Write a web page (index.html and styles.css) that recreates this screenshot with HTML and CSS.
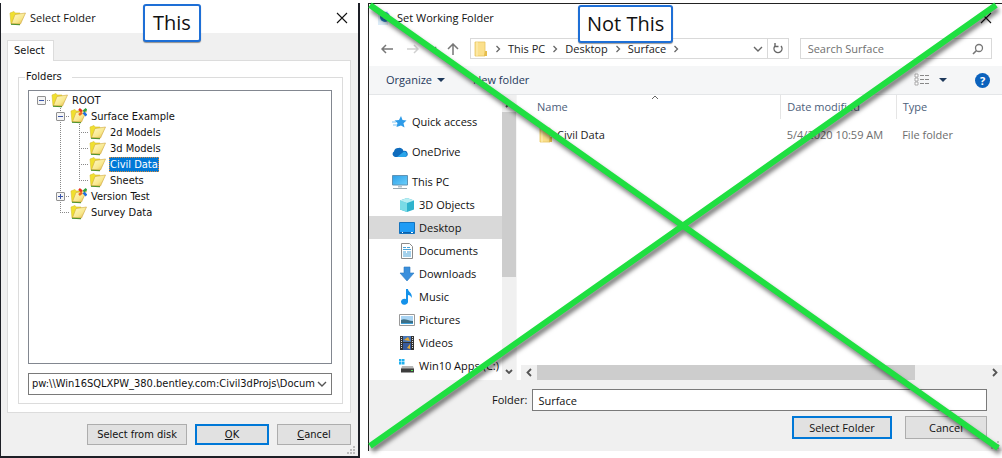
FILE: index.html
```html
<!DOCTYPE html>
<html lang="en">
<head>
    <meta charset="UTF-8">
    <meta name="viewport" content="width=device-width, initial-scale=1.0">
    <title>Select Folder</title>
    <link rel="stylesheet" href="styles.css">
</head>
<body>
    <!-- Shared icons -->
    <svg class="sprite" aria-hidden="true">
        <linearGradient id="gold" x1="0" y1="0" x2="1" y2="1">
            <stop offset="0" stop-color="#fffbd0"/>
            <stop offset=".6" stop-color="#f8e88c"/>
            <stop offset="1" stop-color="#dcb03a"/>
        </linearGradient>
        <linearGradient id="sky" x1="0" y1="0" x2="1" y2="1">
            <stop offset="0" stop-color="#2c9fe8"/>
            <stop offset="1" stop-color="#6cd0fb"/>
        </linearGradient>
        <symbol id="folder" viewBox="0 0 17 16">
            <path d="M1 3l4-1.500 1 1.500h5v10l-9 1z" fill="#f0e02e" stroke="#d8c030" stroke-width=".6"/>
            <path d="M2 14l9 .5" stroke="#3f8f2b" stroke-width="1.500"/>
            <path d="M6 4.500L16.500 3l-5 11L2.500 13.500z" fill="url(#gold)" stroke="#cfa63c" stroke-width=".6"/>
        </symbol>
        <symbol id="project" viewBox="0 0 17 16">
            <use href="#folder" width="17" height="16"/>
            <path d="M9 1l3 2.500" stroke="#e8321c" stroke-width="2.500"/>
            <path d="M16.500 1l-3 2.500" stroke="#2fa33a" stroke-width="2.500"/>
            <path d="M9 7l3-2.500" stroke="#f06a1c" stroke-width="2.500"/>
            <path d="M13.500 4.500l3 3" stroke="#1f6fe0" stroke-width="2.500"/>
        </symbol>
        <symbol id="plain-folder" viewBox="0 0 14 16">
            <path d="M1 1h10v14H1z" fill="#fbe08c" stroke="#e8c560" stroke-width=".8"/>
            <path d="M11 10h2v5h-3z" fill="#e6bd4c"/>
            <path d="M3 1v14" stroke="#fff0b8"/>
        </symbol>
        <symbol id="close" viewBox="0 0 12 12">
            <path d="M1 1l10 10M11 1L1 11" fill="none" stroke="#111" stroke-width="1.100"/>
        </symbol>
        <symbol id="chev-down" viewBox="0 0 10 6">
            <path d="M1 1l4 4 4-4" fill="none" stroke="currentColor" stroke-width="1.400"/>
        </symbol>
        <symbol id="chev-right" viewBox="0 0 6 8">
            <path d="M1.500 1l3 3-3 3" fill="none" stroke="currentColor" stroke-width="1.300"/>
        </symbol>
        <symbol id="grip" viewBox="0 0 9 9">
            <path d="M6 0h2v2h-2zM3 3h2v2H3zM6 3h2v2H6zM0 6h2v2H0zM3 6h2v2H3zM6 6h2v2H6z" fill="#bdbdbd"/>
        </symbol>
    </svg>

    <section class="dialog select-dialog">
        <header class="title-bar">
            <svg class="title-icon" width="17" height="16"><use href="#folder"/></svg>
            <h1>Select Folder</h1>
            <button class="close-btn" aria-label="Close"><svg width="12" height="12"><use href="#close"/></svg></button>
        </header>

        <div class="dialog-body">
            <button class="tab">Select</button>
            <div class="tab-panel">
                <fieldset class="folders">
                    <legend>Folders</legend>
                    <ul class="tree">
                        <li class="tree-row">
                            <span class="guide leaf"><button class="expander" aria-label="Collapse ROOT"></button></span>
                            <svg width="17" height="16"><use href="#folder"/></svg>
                            <span class="tree-label">ROOT</span>
                        </li>
                        <li class="tree-row">
                            <span class="guide empty"></span><span class="guide tee"><button class="expander" aria-label="Collapse Surface Example"></button></span>
                            <svg width="17" height="16"><use href="#project"/></svg>
                            <span class="tree-label">Surface Example</span>
                        </li>
                        <li class="tree-row">
                            <span class="guide empty"></span><span class="guide line"></span><span class="guide tee"></span>
                            <svg width="17" height="16"><use href="#folder"/></svg>
                            <span class="tree-label">2d Models</span>
                        </li>
                        <li class="tree-row">
                            <span class="guide empty"></span><span class="guide line"></span><span class="guide tee"></span>
                            <svg width="17" height="16"><use href="#folder"/></svg>
                            <span class="tree-label">3d Models</span>
                        </li>
                        <li class="tree-row">
                            <span class="guide empty"></span><span class="guide line"></span><span class="guide tee"></span>
                            <svg width="17" height="16"><use href="#folder"/></svg>
                            <span class="tree-label selected">Civil Data</span>
                        </li>
                        <li class="tree-row">
                            <span class="guide empty"></span><span class="guide line"></span><span class="guide elbow"></span>
                            <svg width="17" height="16"><use href="#folder"/></svg>
                            <span class="tree-label">Sheets</span>
                        </li>
                        <li class="tree-row">
                            <span class="guide empty"></span><span class="guide tee"><button class="expander plus" aria-label="Expand Version Test"></button></span>
                            <svg width="17" height="16"><use href="#project"/></svg>
                            <span class="tree-label">Version Test</span>
                        </li>
                        <li class="tree-row">
                            <span class="guide empty"></span><span class="guide elbow"></span>
                            <svg width="17" height="16"><use href="#folder"/></svg>
                            <span class="tree-label">Survey Data</span>
                        </li>
                    </ul>
                    <div class="path-box">
                        <select class="path-select" aria-label="Path">
                            <option>pw:\\Win16SQLXPW_380.bentley.com:Civil3dProjs\Docum</option>
                        </select>
                        <svg width="10" height="6"><use href="#chev-down"/></svg>
                    </div>
                </fieldset>
            </div>
            <div class="actions">
                <button class="btn wide">Select from disk</button>
                <button class="btn primary"><span><u>O</u>K</span></button>
                <button class="btn"><span><u>C</u>ancel</span></button>
            </div>
        </div>
        <svg class="grip" width="9" height="9"><use href="#grip"/></svg>
        <div class="callout callout-this">This</div>
    </section>

    <section class="dialog working-dialog">
        <header class="title-bar">
            <svg class="title-icon" width="16" height="16" viewBox="0 0 16 16">
                <path d="M1 1h10v14H1z" fill="#dcecf8"/>
                <circle cx="8" cy="7" r="5" fill="#2b7fc4"/>
                <circle cx="8" cy="7" r="2" fill="#9bd0f2"/>
            </svg>
            <h1>Set Working Folder</h1>
            <button class="close-btn" aria-label="Close"><svg width="12" height="12"><use href="#close"/></svg></button>
        </header>

        <div class="nav-row">
            <div class="nav-buttons">
                <button aria-label="Back"><svg width="12" height="10" viewBox="0 0 12 10"><path d="M12 5H1M5 1L1 5l4 4" fill="none" stroke="#777" stroke-width="1.500"/></svg></button>
                <button aria-label="Forward"><svg width="12" height="10" viewBox="0 0 12 10"><path d="M0 5h11M7 1l4 4-4 4" fill="none" stroke="#d0d0d0" stroke-width="1.500"/></svg></button>
                <button aria-label="Recent"><svg width="8" height="5"><use href="#chev-down"/></svg></button>
                <button aria-label="Up"><svg width="12" height="12" viewBox="0 0 12 12"><path d="M6 12V1M1 6l5-5 5 5" fill="none" stroke="#777" stroke-width="1.500"/></svg></button>
            </div>
            <nav class="address">
                <svg width="14" height="16"><use href="#plain-folder"/></svg>
                <svg class="sep" width="6" height="8"><use href="#chev-right"/></svg>
                <a href="#">This PC</a>
                <svg class="sep" width="6" height="8"><use href="#chev-right"/></svg>
                <a href="#">Desktop</a>
                <svg class="sep" width="6" height="8"><use href="#chev-right"/></svg>
                <a href="#">Surface</a>
                <svg class="sep" width="6" height="8"><use href="#chev-right"/></svg>
                <button class="history" aria-label="Previous locations"><svg width="10" height="6"><use href="#chev-down"/></svg></button>
                <button class="refresh" aria-label="Refresh">
                    <svg width="12" height="12" viewBox="0 0 12 12"><path d="M3 3a4 4 0 1 0 6 0M3 0v3.500h3.500" fill="none" stroke="#666" stroke-width="1.400"/></svg>
                </button>
            </nav>
            <div class="search">
                <input type="text" placeholder="Search Surface" aria-label="Search Surface">
                <svg width="12" height="12" viewBox="0 0 12 12"><circle cx="7" cy="5" r="3.500" fill="none" stroke="#777" stroke-width="1.300"/><path d="M4.500 7.500L1 11" stroke="#777" stroke-width="1.600"/></svg>
            </div>
        </div>

        <div class="toolbar">
            <button class="tool">Organize <span class="caret"></span></button>
            <button class="tool">New folder</button>
            <button class="tool view-btn" aria-label="Change your view">
                <svg width="16" height="14" viewBox="0 0 16 14">
                    <path d="M1 1h3v3H1zM1 5h3v3H1zM1 9h3v3H1z" fill="#fff" stroke="#999" stroke-width=".8"/>
                    <path d="M6 2.500h4M11 2.500h4M6 6.500h4M11 6.500h4M6 10.500h4M11 10.500h4" stroke="#888"/>
                </svg>
                <span class="caret"></span>
            </button>
            <button class="help" aria-label="Help">?</button>
        </div>

        <div class="browser">
            <nav class="places">
                <a class="place root" href="#">
                    <svg width="16" height="16" viewBox="0 0 16 16"><path d="M9 2l1.500 4 4 .5-3 2.700 1 4.300L9 11.500 4.500 13l1-4L2.500 6.500l4.500-.5z" fill="#2d9be8"/><path d="M0 8h4M1 11h4" stroke="#7cc3f2"/></svg>
                    Quick access
                </a>
                <a class="place root" href="#">
                    <svg width="16" height="16" viewBox="0 0 16 16"><path d="M3 13a3 3 0 0 1-1-5.500 4 4 0 0 1 4.500-3.500 4 4 0 0 1 5 3 3 3 0 0 1 2 6z" fill="#0f6cbd"/><path d="M5 13l7-5.500a3 3 0 0 1 1.500 5.500z" fill="#2aa5ea"/></svg>
                    OneDrive
                </a>
                <a class="place root" href="#">
                    <svg width="16" height="16" viewBox="0 0 16 16"><path d="M.5 1.500h15v9.500H.5z" fill="url(#sky)" stroke="#5f93b5"/><path d="M6 11.500h4v2H6z" fill="#b7c4cc"/><path d="M1 14.500h14" stroke="#9aa8b0"/></svg>
                    This PC
                </a>
                <a class="place" href="#">
                    <svg width="16" height="16" viewBox="0 0 16 16"><path d="M8 1l7 2.500v9L8 15l-7-2.500v-9z" fill="#2fb3cd"/><path d="M1 3.500L8 6v9l-7-2.500z" fill="#7adbe6"/><path d="M8 1l7 2.500L8 6 1 3.500z" fill="#b9eef2"/></svg>
                    3D Objects
                </a>
                <a class="place current" href="#">
                    <svg width="16" height="16" viewBox="0 0 16 16"><path d="M.5 2.500h15v11H.5z" fill="#1f9cf5" stroke="#1573bd"/><path d="M1 12.500h14" stroke="#0c5fa8"/><path d="M3 12.500h1M12 12.500h2" stroke="#fff"/></svg>
                    Desktop
                </a>
                <a class="place" href="#">
                    <svg width="16" height="16" viewBox="0 0 16 16"><path d="M2.500.5h8l3 3v12h-11z" fill="#fff" stroke="#8b8b8b"/><path d="M4 4.500h3M8 4.500h3M4 6.500h8M4 9h3M8 9h4M4 11h8M4 13h8" stroke="#4aa3d8"/></svg>
                    Documents
                </a>
                <a class="place" href="#">
                    <svg width="16" height="16" viewBox="0 0 16 16"><path d="M5 1h6v6h4l-7 8-7-8h4z" fill="#3a8fdc" stroke="#2b78c0" stroke-width=".6"/></svg>
                    Downloads
                </a>
                <a class="place" href="#">
                    <svg width="16" height="16" viewBox="0 0 16 16"><path d="M7 0h2c0 3 5 4 3.500 9-.5-2-2-3-3.500-3v6.500a3.500 3 0 1 1-2-2.500z" fill="#1592ea"/></svg>
                    Music
                </a>
                <a class="place" href="#">
                    <svg width="16" height="16" viewBox="0 0 16 16"><path d="M.5 2.500h15v11H.5z" fill="#fff" stroke="#999"/><path d="M2 4h12v8H2z" fill="#a9d4f3"/><path d="M2 8c4-2 7 1 12 1v3H2z" fill="#3d6f86"/><path d="M2 11h12v1H2z" fill="#3fa0d8"/></svg>
                    Pictures
                </a>
                <a class="place" href="#">
                    <svg width="16" height="16" viewBox="0 0 16 16"><path d="M1 1h14v14H1z" fill="#333"/><path d="M4 1h8v6H4z" fill="#4a78b8"/><path d="M4 8h8v7H4z" fill="#365a9c"/><path d="M5 5l4-3 2 4zM8 13l3-4v5z" fill="#e0a83a"/><path d="M2.500 2v12M13.500 2v12" stroke="#ddd" stroke-dasharray="1 1"/></svg>
                    Videos
                </a>
                <a class="place" href="#">
                    <svg width="16" height="16" viewBox="0 0 16 16"><path d="M0 1h2.500v2.500H0zM3 1h2.500v2.500H3zM0 4h2.500v2.500H0zM3 4h2.500v2.500H3z" fill="#1fb0ee"/><path d="M3 8h11l1 3H2z" fill="#b5b5b5"/><path d="M2 10.500h13v4H2z" fill="#3d3d3d"/><path d="M12 12.500h2" stroke="#52e052"/></svg>
                    Win10 Apps (C:)
                </a>
            </nav>
            <div class="v-scroll">
                <svg width="8" height="5" viewBox="0 0 8 5"><path d="M1 4l3-3 3 3" fill="none" stroke="#555" stroke-width="1.800"/></svg>
                <div class="v-thumb"></div>
                <svg width="8" height="5" viewBox="0 0 8 5"><path d="M1 1l3 3 3-3" fill="none" stroke="#555" stroke-width="1.800"/></svg>
            </div>
            <div class="files">
                <table>
                    <thead>
                        <tr>
                            <th class="col-name">Name<svg class="sort" width="8" height="5" viewBox="0 0 8 5"><path d="M1 4l3-3 3 3" fill="none" stroke="#666"/></svg></th>
                            <th class="col-date">Date modified</th>
                            <th>Type</th>
                        </tr>
                    </thead>
                    <tbody>
                        <tr>
                            <td class="file-name"><svg width="14" height="16"><use href="#plain-folder"/></svg>Civil Data</td>
                            <td>5/4/2020 10:59 AM</td>
                            <td>File folder</td>
                        </tr>
                    </tbody>
                </table>
                <div class="h-scroll">
                    <svg width="6" height="9" viewBox="0 0 6 9"><path d="M5 1L1.500 4.500 5 8" fill="none" stroke="#555" stroke-width="1.800"/></svg>
                    <div class="h-track"><div class="h-thumb"></div></div>
                    <svg width="6" height="9" viewBox="0 0 6 9"><path d="M1 1l3.500 3.500L1 8" fill="none" stroke="#555" stroke-width="1.800"/></svg>
                </div>
            </div>
        </div>

        <footer class="footer">
            <div class="folder-field">
                <label for="folder-name">Folder:</label>
                <input id="folder-name" type="text" value="Surface">
            </div>
            <div class="footer-actions">
                <button class="btn wide primary">Select Folder</button>
                <button class="btn">Cancel</button>
            </div>
        </footer>
        <svg class="grip" width="9" height="9"><use href="#grip"/></svg>

        <svg class="cross" viewBox="0 0 634 448" preserveAspectRatio="none" aria-hidden="true">
            <path d="M2 2l629 444M2 444L629 2" fill="none" stroke="#1fdf41" stroke-width="6"/>
        </svg>
        <div class="callout callout-not">Not This</div>
    </section>
</body>
</html>
```

FILE: styles.css
```css
* {
    margin: 0;
    padding: 0;
    box-sizing: border-box;
}

body {
    display: flex;
    gap: 8px;
    min-height: 100vh;
    padding-top: 3px;
    background: #fff;
    color: #111;
    font-family: "Open Sans", "Noto Sans", sans-serif;
    font-size: 11px;
    line-height: 16px;
}

button,
input,
select {
    font: inherit;
    color: inherit;
    background: none;
    border: none;
    border-radius: 0;
}

a {
    color: inherit;
    text-decoration: none;
}

svg {
    flex: none;
    display: block;
}

.sprite {
    position: absolute;
    width: 0;
    height: 0;
}

/* Dialogs */
.dialog {
    position: relative;
    display: flex;
    flex-direction: column;
    min-width: 0;
}

.select-dialog {
    flex: 357;
    border: 1px solid #1d1f26;
    border-width: 0 2px 2px 1px;
    background: #f0f0f0;
    font-family: "DejaVu Sans Condensed", "Noto Sans", sans-serif;
}

.working-dialog {
    flex: 633;
    margin-bottom: 7px;
    border: 1px solid #222;
    border-width: 1px 0 0 1px;
    background: #fff;
}

.title-bar {
    display: flex;
    align-items: center;
    gap: 4px;
    height: 30px;
    padding: 0 8px;
    background: #fff;
    font-family: "Open Sans", "Noto Sans", sans-serif;
}

.title-bar h1 {
    flex: 1;
    font-size: 11px;
    font-weight: 400;
}

.close-btn {
    display: flex;
    padding: 2px;
}

.grip {
    position: absolute;
    right: 2px;
    bottom: 1px;
}

.btn {
    width: 74px;
    height: 21px;
    border: 1px solid #adadad;
    background: #e1e1e1;
    line-height: 16px;
    text-align: center;
}

.btn.wide {
    width: 100px;
}

.btn.primary {
    border: 2px solid #0078d7;
}

/* Left dialog */
.dialog-body {
    flex: 1;
    display: flex;
    flex-direction: column;
    padding: 7px 7px 11px 6px;
}

.tab {
    align-self: flex-start;
    height: 21px;
    margin-bottom: -1px;
    padding: 0 8px 0 6px;
    border: 1px solid #dcdcdc;
    border-bottom: none;
    background: #fff;
    z-index: 1;
}

.tab-panel {
    flex: 1;
    display: flex;
    padding: 8px 7px 8px 10px;
    border: 1px solid #dcdcdc;
    background: #fff;
}

.folders {
    flex: 1;
    display: flex;
    flex-direction: column;
    gap: 9px;
    min-width: 0;
    padding: 5px 10px 8px 9px;
    border: 1px solid #dcdcdc;
}

.folders legend {
    margin-left: -3px;
    padding: 0 10px 0 1px;
}

.tree {
    flex: 1;
    padding: 1px 0 0 3px;
    border: 1px solid #828790;
    list-style: none;
}

.tree-row {
    display: flex;
    align-items: center;
    height: 16px;
}

.tree-label {
    margin-left: 3px;
    padding: 0 1px;
    line-height: 15px;
    white-space: nowrap;
}

.tree-label.selected {
    outline: 1px dotted #d98a3a;
    outline-offset: -1px;
    background: #0078d7;
    color: #fff;
}

.guide {
    display: flex;
    align-items: center;
    width: 19px;
    height: 16px;
    padding-left: 5px;
    background-repeat: no-repeat;
}

/* dotted connector lines between tree rows */
.leaf {
    background-image: repeating-linear-gradient(90deg, #888 0 1px, transparent 1px 2px);
    background-size: 10px 1px;
    background-position: 9px 8px;
}

.line {
    background-image: repeating-linear-gradient(#888 0 1px, transparent 1px 2px);
    background-size: 1px 16px;
    background-position: 9px 0;
}

.tee,
.elbow {
    background-image:
        repeating-linear-gradient(#888 0 1px, transparent 1px 2px),
        repeating-linear-gradient(90deg, #888 0 1px, transparent 1px 2px);
    background-size: 1px 16px, 10px 1px;
    background-position: 9px 0, 9px 8px;
}

.elbow {
    background-size: 1px 8px, 10px 1px;
}

.expander {
    width: 9px;
    height: 9px;
    border: 1px solid #919191;
    border-radius: 1px;
    background: linear-gradient(#3a55a8, #3a55a8) center / 5px 1px no-repeat, #f4f4f4;
}

.expander.plus {
    background:
        linear-gradient(#3a55a8, #3a55a8) center / 5px 1px no-repeat,
        linear-gradient(#3a55a8, #3a55a8) center / 1px 5px no-repeat,
        #f4f4f4;
}

.path-box {
    display: flex;
    align-items: center;
    height: 22px;
    padding: 0 4px 0 3px;
    border: 1px solid #7a7a7a;
    color: #555;
}

.path-select {
    flex: 1;
    min-width: 0;
    height: 20px;
    color: #111;
    appearance: none;
    outline: none;
}

.actions {
    display: flex;
    justify-content: flex-end;
    gap: 8px;
    margin-top: 11px;
}

/* Right dialog */
.working-dialog .title-bar {
    height: 28px;
}

.nav-row {
    display: flex;
    align-items: center;
    gap: 11px;
    padding: 6px 10px 7px 12px;
    color: #666;
}

.nav-buttons {
    display: flex;
    align-items: center;
    gap: 14px;
    width: 78px;
}

.nav-buttons button:nth-child(3) {
    margin: 0 -4px;
}

.address {
    flex: 313;
    display: flex;
    align-items: center;
    gap: 7px;
    height: 21px;
    padding-left: 3px;
    border: 1px solid #d9d9d9;
}

.address a {
    color: #222;
}

.history {
    margin-left: auto;
    padding: 0 4px 0 0;
}

.refresh {
    display: flex;
    align-items: center;
    align-self: stretch;
    padding: 0 4px;
    margin-left: -7px;
    border-left: 1px solid #d9d9d9;
}

.search {
    flex: 176;
    display: flex;
    align-items: center;
    height: 21px;
    padding: 0 7px;
    border: 1px solid #d9d9d9;
}

.search input {
    flex: 1;
    min-width: 0;
    outline: none;
}

.search input::placeholder {
    color: #707070;
}

.toolbar {
    display: flex;
    align-items: center;
    gap: 28px;
    height: 29px;
    padding: 0 12px 0 17px;
    border-bottom: 1px solid #e4e6e8;
    background: #f5f6f7;
    color: #1e395b;
}

.tool {
    display: flex;
    align-items: center;
    gap: 5px;
    white-space: nowrap;
}

.view-btn {
    margin-left: auto;
    gap: 9px;
}

.caret {
    border: 4px solid transparent;
    border-top-color: #1e395b;
    border-bottom: none;
}

.help {
    width: 15px;
    height: 15px;
    border-radius: 50%;
    background: #0b62bd;
    color: #fff;
    font-weight: 700;
    line-height: 15px;
}

.browser {
    flex: 1;
    display: flex;
    min-height: 0;
}

.places {
    flex: 133;
    min-width: 0;
    padding-top: 15px;
}

.place {
    display: flex;
    align-items: center;
    gap: 4px;
    height: 23px;
    padding-left: 30px;
    white-space: nowrap;
}

.place.root {
    margin-bottom: 7px;
    padding-left: 23px;
}

.place.root:nth-child(3) {
    margin-bottom: 0;
}

.place.current {
    background: #d9d9d9;
}

.v-scroll {
    display: flex;
    flex-direction: column;
    align-items: center;
    justify-content: space-between;
    width: 15px;
    padding: 8px 0 6px;
    border-right: 1px solid #f5f5f5;
    background: #f0f0f0;
}

.v-thumb {
    width: 14px;
    height: 165px;
    margin: 4px 0 auto;
    background: #cdcdcd;
}

.files {
    flex: 481;
    display: flex;
    flex-direction: column;
    justify-content: space-between;
    min-width: 0;
    margin-left: 4px;
}

table {
    width: 100%;
    border-collapse: collapse;
    table-layout: fixed;
}

th {
    position: relative;
    height: 24px;
    padding-left: 6px;
    border-right: 1px solid #e5e5e5;
    color: #4c607a;
    font-weight: 400;
    text-align: left;
}

th:last-child {
    border-right: none;
}

td {
    height: 32px;
    padding-left: 6px;
    color: #6d6d6d;
    white-space: nowrap;
}

.col-name {
    width: 54%;
    padding-left: 16px;
}

.col-date {
    width: 24%;
}

.sort {
    position: absolute;
    top: 0;
    left: 50%;
}

.file-name {
    display: flex;
    align-items: center;
    gap: 4px;
    padding-left: 18px;
    color: #222;
}

.h-scroll {
    display: flex;
    align-items: center;
    height: 15px;
    padding: 0 4px 0 5px;
    background: #f0f0f0;
}

.h-track {
    flex: 1;
    margin: 0 5px;
}

.h-thumb {
    width: 84%;
    height: 15px;
    background: #cdcdcd;
}

.footer {
    padding: 9px 15px 12px 123px;
    background: #f0f0f0;
}

.folder-field {
    display: flex;
    align-items: center;
    gap: 5px;
}

.folder-field input {
    flex: 1;
    min-width: 0;
    height: 22px;
    padding: 0 5px;
    border: 1px solid #7a7a7a;
    background: #fff;
}

.footer-actions {
    display: flex;
    justify-content: flex-end;
    gap: 13px;
    margin-top: 5px;
}

.footer .btn {
    width: 82px;
    height: 23px;
}

.footer .btn.wide {
    width: 100px;
}

/* Annotations over the dialogs */
.cross {
    position: absolute;
    top: -1px;
    left: -1px;
    width: 100%;
    height: 100%;
    overflow: visible;
    pointer-events: none;
    filter: drop-shadow(2px 4px 2px rgba(0, 0, 0, 0.5));
}

.callout {
    position: absolute;
    top: 1px;
    padding: 0 7px;
    border: 2px solid #1e6fd6;
    border-radius: 3px;
    background: #fff;
    box-shadow: 0 1px 1px rgba(0, 0, 0, 0.4);
    font-family: "Open Sans", "Noto Sans", sans-serif;
    font-size: 20px;
    line-height: 34px;
}

.callout-this {
    left: 142px;
    padding: 0 8px;
}

.callout-not {
    left: 209px;
}
```
